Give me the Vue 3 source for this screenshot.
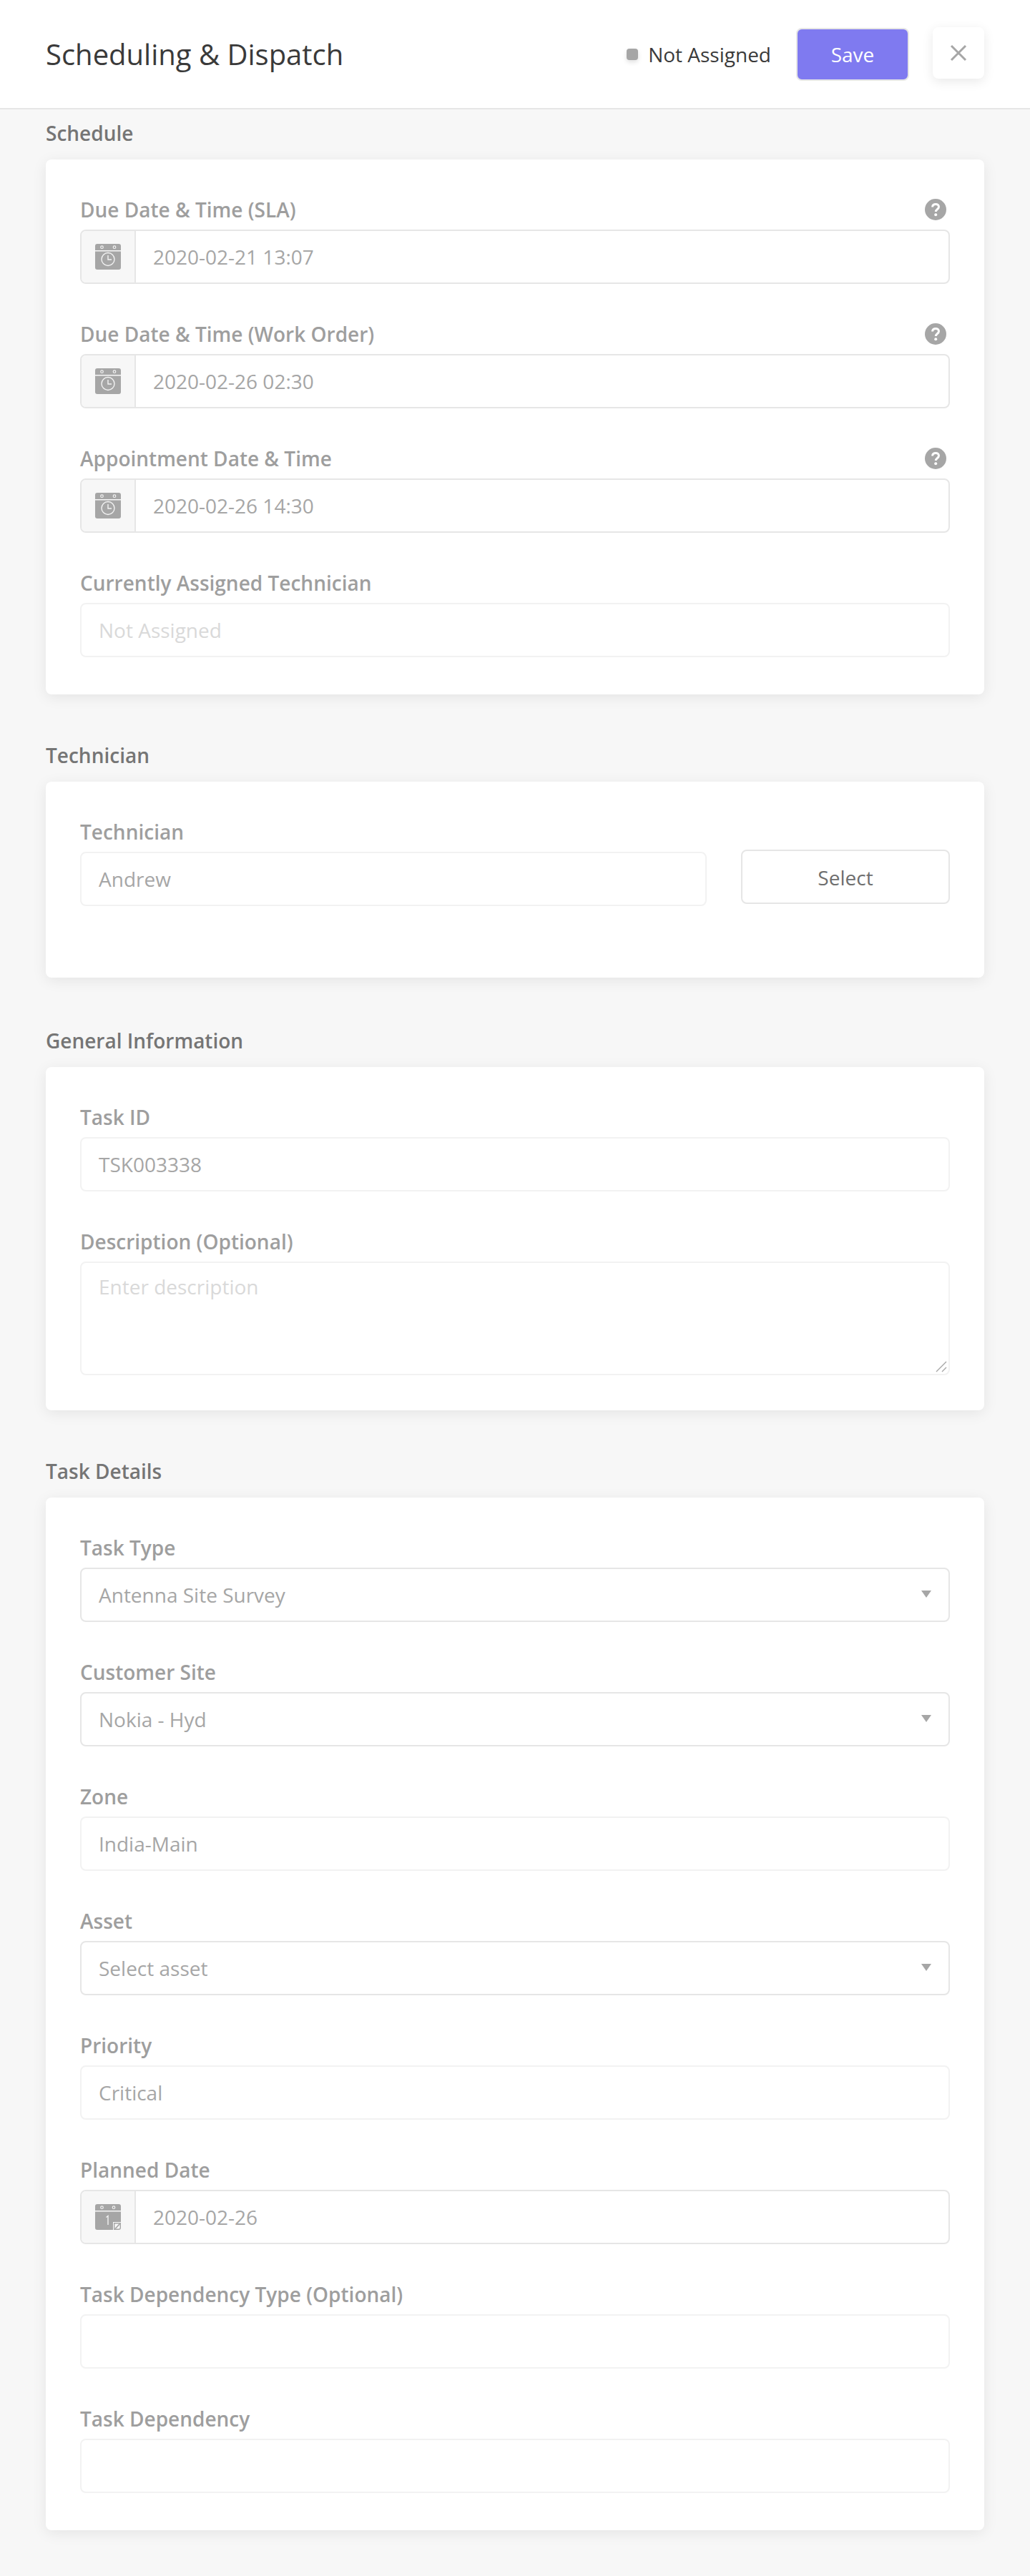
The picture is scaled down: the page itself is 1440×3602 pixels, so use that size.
<script setup>
// form data, one entry per card
const sections = [
  {
    title: 'Schedule',
    fields: [
      { label: 'Due Date & Time (SLA)', type: 'date', icon: 'clock', value: '2020-02-21 13:07', help: true },
      { label: 'Due Date & Time (Work Order)', type: 'date', icon: 'clock', value: '2020-02-26 02:30', help: true },
      { label: 'Appointment Date & Time', type: 'date', icon: 'clock', value: '2020-02-26 14:30', help: true },
      { label: 'Currently Assigned Technician', type: 'text', placeholder: 'Not Assigned' }
    ]
  },
  {
    title: 'Technician',
    picker: true,
    fields: [{ label: 'Technician', type: 'text', value: 'Andrew' }]
  },
  {
    title: 'General Information',
    fields: [
      { label: 'Task ID', type: 'text', value: 'TSK003338' },
      { label: 'Description (Optional)', type: 'textarea', placeholder: 'Enter description' }
    ]
  },
  {
    title: 'Task Details',
    fields: [
      { label: 'Task Type', type: 'select', value: 'Antenna Site Survey' },
      { label: 'Customer Site', type: 'select', value: 'Nokia - Hyd' },
      { label: 'Zone', type: 'text', value: 'India-Main' },
      { label: 'Asset', type: 'select', value: 'Select asset' },
      { label: 'Priority', type: 'text', value: 'Critical' },
      { label: 'Planned Date', type: 'date', icon: 'day', value: '2020-02-26' },
      { label: 'Task Dependency Type (Optional)', type: 'text' },
      { label: 'Task Dependency', type: 'text' }
    ]
  }
]
</script>

<template>
  <div class="page">
    <header class="topbar">
      <h1 class="page-title">Scheduling &amp; Dispatch</h1>
      <div class="status">
        <span class="status-dot"></span>
        <span class="status-text">Not Assigned</span>
      </div>
      <button class="save-btn">Save</button>
      <button class="close-btn" aria-label="Close">
        <svg width="24" height="24" viewBox="0 0 24 24">
          <path d="M2 2 22 22M22 2 2 22" stroke="#a6a6a6" stroke-width="3" fill="none" />
        </svg>
      </button>
    </header>

    <main class="content">
      <section v-for="section in sections" :key="section.title" class="section" :class="{ 'section-picker': section.picker }">
        <h2 class="section-title">{{ section.title }}</h2>
        <div class="card" :class="{ 'card-picker': section.picker }">
          <div v-for="field in section.fields" :key="field.label" class="field">
            <div class="label-row">
              <label class="field-label">{{ field.label }}</label>
              <svg v-if="field.help" class="help" width="30" height="30" viewBox="0 0 30 30">
                <circle cx="15" cy="15" r="15" fill="#a6a6a6" />
                <path d="M10.6 11.6c0-2.7 2-4.2 4.5-4.2s4.4 1.5 4.4 3.8c0 3.4-4.2 3.6-4.2 6.8" stroke="#fff" stroke-width="3" fill="none" />
                <circle cx="15.2" cy="22.2" r="2" fill="#fff" />
              </svg>
            </div>

            <div v-if="field.type === 'date'" class="box box-date">
              <span class="prepend">
                <svg v-if="field.icon === 'clock'" width="36" height="36" viewBox="0 0 36 36">
                  <path d="M3 0h30a3 3 0 0 1 3 3v6H0V3a3 3 0 0 1 3-3Z" fill="#a6a6a6" />
                  <path d="M0 10.5h36V33a3 3 0 0 1-3 3H3a3 3 0 0 1-3-3Z" fill="#a6a6a6" />
                  <circle cx="9.5" cy="4.7" r="1.8" fill="none" stroke="#f2f2f2" stroke-width="1.2" />
                  <circle cx="27" cy="4.7" r="1.8" fill="none" stroke="#f2f2f2" stroke-width="1.2" />
                  <circle cx="18" cy="21.5" r="9" fill="none" stroke="#f2f2f2" stroke-width="1.4" />
                  <path d="M18 16v6h5" fill="none" stroke="#f2f2f2" stroke-width="1.4" />
                </svg>
                <svg v-else width="36" height="36" viewBox="0 0 36 36">
                  <path d="M3 0h30a3 3 0 0 1 3 3v6H0V3a3 3 0 0 1 3-3Z" fill="#a6a6a6" />
                  <path d="M0 10.5h36V25H25v11H3a3 3 0 0 1-3-3Z" fill="#a6a6a6" />
                  <circle cx="9.5" cy="4.7" r="1.8" fill="none" stroke="#f2f2f2" stroke-width="1.2" />
                  <circle cx="26" cy="4.7" r="1.8" fill="none" stroke="#f2f2f2" stroke-width="1.2" />
                  <path d="M15.5 18.5l2.5-2V29" fill="none" stroke="#f2f2f2" stroke-width="1.4" />
                  <path d="M26.7 26.7h8.6V33a2.3 2.3 0 0 1-2.3 2.3h-6.3Z" fill="none" stroke="#a6a6a6" stroke-width="1.4" />
                  <path d="M28 34.5l6.5-7" stroke="#a6a6a6" stroke-width="1.8" />
                </svg>
              </span>
              <span class="box-text">{{ field.value }}</span>
            </div>

            <div v-else-if="field.type === 'select'" class="box box-select">
              <span class="box-text">{{ field.value }}</span>
              <span class="caret"></span>
            </div>

            <div v-else-if="field.type === 'textarea'" class="box box-light box-area">
              <span class="box-text placeholder">{{ field.placeholder }}</span>
              <svg class="grip" width="16" height="16" viewBox="0 0 16 16">
                <path d="M1 15 15 1M9 15l6-6" stroke="#a6a6a6" stroke-width="1.4" />
              </svg>
            </div>

            <div v-else class="box box-light">
              <span v-if="field.value" class="box-text">{{ field.value }}</span>
              <span v-else-if="field.placeholder" class="box-text placeholder">{{ field.placeholder }}</span>
            </div>
          </div>
          <button v-if="section.picker" class="select-btn">Select</button>
        </div>
      </section>
    </main>
  </div>
</template>

<style>
body {
  margin: 0;
  background: #f7f7f7;
}
</style>

<style scoped>
.page {
  min-height: 3602px;
  background: #f7f7f7;
  font-family: "Open Sans", "Liberation Sans", sans-serif;
  box-sizing: border-box;
}

.topbar {
  display: flex;
  align-items: center;
  height: 151px;
  padding: 0 64px;
  background: #fff;
  border-bottom: 2px solid #e6e6e6;
}

.page-title {
  margin: 0 auto 0 0;
  font-size: 40px;
  font-weight: 400;
  color: #3a3a3a;
}

.status {
  display: flex;
  align-items: center;
  gap: 14px;
  margin-right: 35px;
}

.status-dot {
  width: 16px;
  height: 16px;
  border-radius: 4px;
  background: #a6a6a6;
  box-shadow: 0 3px 6px rgba(0, 0, 0, 0.12);
}

.status-text {
  font-size: 28px;
  color: #3a3a3a;
}

.save-btn {
  width: 158px;
  height: 74px;
  border: 2px solid #e6e6e6;
  border-radius: 8px;
  background: #7f7af0;
  color: #fff;
  font-family: inherit;
  font-size: 28px;
}

.close-btn {
  display: flex;
  align-items: center;
  justify-content: center;
  width: 72px;
  height: 72px;
  margin: 0 0 3px 33px;
  border: 0;
  border-radius: 8px;
  background: #fff;
  box-shadow: 0 4px 16px rgba(0, 0, 0, 0.09);
}

.content {
  padding: 13px 64px 64px;
}

.section + .section {
  margin-top: 65px;
}

.section-picker {
  margin-bottom: 68px;
}

.section-title {
  margin: 0 0 17px;
  font-size: 28px;
  line-height: 40px;
  font-weight: 600;
  color: #757575;
}

.card {
  padding: 50px 48px 2px;
  background: #fff;
  border-radius: 8px;
  box-shadow: 0 4px 20px rgba(0, 0, 0, 0.08);
}

.card-picker {
  display: flex;
  align-items: flex-start;
  gap: 48px;
  padding-bottom: 50px;
}

.card-picker .field {
  flex: 1;
}

.field {
  margin-bottom: 50px;
}

.label-row {
  display: flex;
  align-items: center;
  justify-content: space-between;
  height: 40px;
  margin-bottom: 8px;
  padding-right: 5px;
}

.field-label {
  font-size: 28px;
  font-weight: 600;
  color: #9e9e9e;
}

.box {
  position: relative;
  display: flex;
  align-items: center;
  height: 76px;
  box-sizing: border-box;
  padding: 0 24px;
  border: 2px solid #e6e6e6;
  border-radius: 8px;
  background: #fff;
}

.box-light {
  border-color: #f2f2f2;
}

.box-area {
  align-items: flex-start;
  height: 159px;
  margin-bottom: -3px;
  padding-top: 14px;
}

.box-date {
  padding: 0;
}

.prepend {
  display: flex;
  align-items: center;
  justify-content: center;
  flex: none;
  width: 74px;
  height: 100%;
  margin-right: 24px;
  background: #f7f7f7;
  border-right: 2px solid #e6e6e6;
  border-radius: 6px 0 0 6px;
}

.box-text {
  font-size: 28px;
  color: #a6a6a6;
}

.placeholder {
  color: #d9d9d9;
}

.caret {
  position: absolute;
  right: 24px;
  top: 30px;
  width: 0;
  height: 0;
  border-left: 7px solid transparent;
  border-right: 7px solid transparent;
  border-top: 10px solid #a6a6a6;
}

.grip {
  position: absolute;
  right: 2px;
  bottom: 2px;
}

.select-btn {
  flex: none;
  width: 292px;
  height: 76px;
  margin-top: 45px;
  padding-top: 3px;
  border: 2px solid #e6e6e6;
  border-radius: 8px;
  background: #fff;
  color: #6e6e6e;
  font-family: inherit;
  font-size: 28px;
}
</style>
